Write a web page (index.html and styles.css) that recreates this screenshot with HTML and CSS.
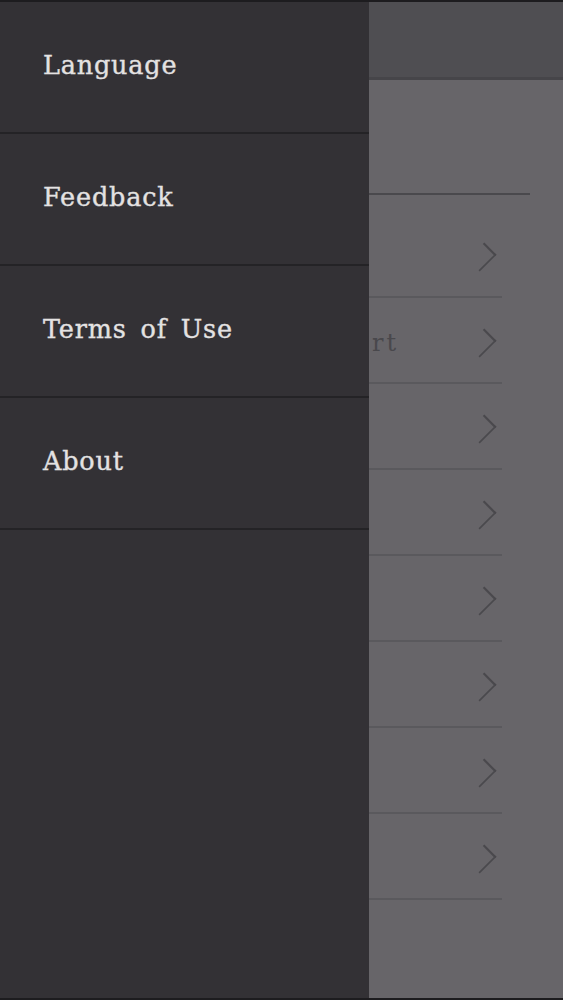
FILE: index.html
```html
<!DOCTYPE html>
<html lang="en">
<head>
  <meta charset="UTF-8" />
  <title>Menu</title>
  <meta name="viewport" content="width=device-width, initial-scale=1.0" />
  <link rel="stylesheet" href="styles.css">
</head>
<body>
  <div class="screen">
    <nav class="drawer">
      <a class="drawer-item" href="#">Language</a>
      <a class="drawer-item" href="#">Feedback</a>
      <a class="drawer-item" href="#">Terms of Use</a>
      <a class="drawer-item" href="#">About</a>
    </nav>

    <div class="page">
      <header class="topbar"></header>
      <div class="page-body">
        <div class="section-rule"></div>
        <ul class="list">
          <li class="row"><span class="row-label"></span><span class="chevron"></span></li>
          <li class="row"><span class="row-label">rt</span><span class="chevron"></span></li>
          <li class="row"><span class="row-label"></span><span class="chevron"></span></li>
          <li class="row"><span class="row-label"></span><span class="chevron"></span></li>
          <li class="row"><span class="row-label"></span><span class="chevron"></span></li>
          <li class="row"><span class="row-label"></span><span class="chevron"></span></li>
          <li class="row"><span class="row-label"></span><span class="chevron"></span></li>
          <li class="row"><span class="row-label"></span><span class="chevron"></span></li>
        </ul>
      </div>
    </div>
  </div>
</body>
</html>
```

FILE: styles.css
```css
* {
  box-sizing: border-box;
  margin: 0;
  padding: 0;
}

body {
  font-family: 'DejaVu Serif', 'Liberation Serif', serif;
  background: #676569;
  overflow: hidden;
}

.screen {
  display: flex;
  height: 1000px;
  border-top: 2px solid #1d1c1f;
  border-bottom: 2px solid #1d1c1f;
  background: #676569;
}

/* side drawer */
.drawer {
  flex: 0 0 369px;
  background: #333135;
  display: flex;
  flex-direction: column;
}

.drawer-item {
  display: flex;
  align-items: center;
  height: 132px;
  padding-left: 43px;
  padding-bottom: 5px;
  border-bottom: 2px solid #242326;
  color: #e4e2e2;
  text-decoration: none;
  font-size: 25.5px;
  letter-spacing: 0.8px;
  word-spacing: 5px;
  -webkit-text-stroke: 0.35px #e4e2e2;
}

/* page pushed aside by the drawer (dimmed) */
.page {
  flex: 1;
  display: flex;
  flex-direction: column;
  overflow: hidden;
}

.topbar {
  height: 78px;
  background: #4f4e52;
  border-bottom: 3px solid #464549;
}

.page-body {
  flex: 1;
  padding-top: 113px;
}

.section-rule {
  height: 2px;
  margin-right: 33px;
  background: #4a494d;
}

.list {
  list-style: none;
  margin-top: 17px;
  margin-right: 61px;
}

.row {
  display: flex;
  align-items: center;
  justify-content: space-between;
  height: 86px;
  padding: 6px 5px 0 0;
  border-bottom: 2px solid #5a595d;
}

.row-label {
  padding-left: 3px;
  font-size: 24px;
  letter-spacing: 3px;
  color: #49484c;
  white-space: nowrap;
}

.chevron {
  width: 22px;
  height: 22px;
  border-top: 2px solid #4a494d;
  border-right: 2px solid #4a494d;
  transform: rotate(45deg) scale(0.78, 1.08);
  margin-right: 4px;
}
```
